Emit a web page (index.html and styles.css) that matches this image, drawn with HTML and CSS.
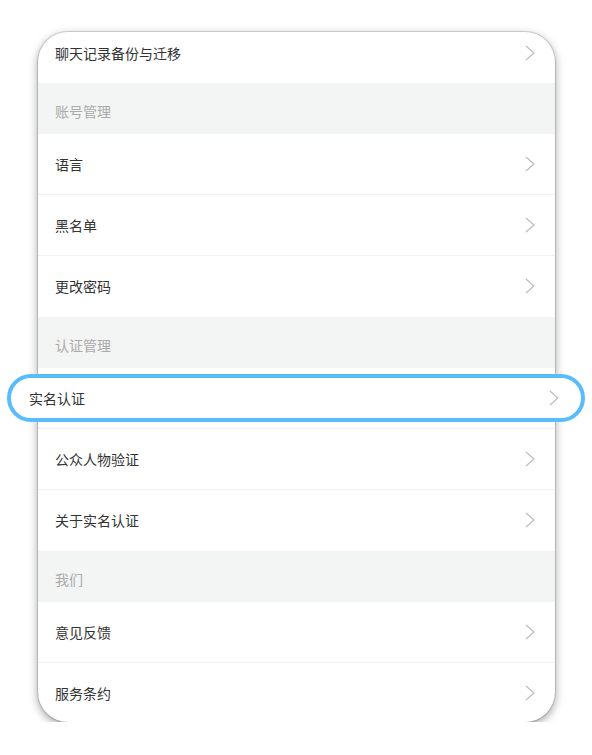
FILE: index.html
```html
<!DOCTYPE html>
<html lang="zh-CN">
<head>
    <meta charset="UTF-8">
    <meta name="viewport" content="width=device-width, initial-scale=1.0">
    <title>设置</title>
    <link rel="stylesheet" href="styles.css">
</head>
<body>
    <div class="card">
        <div class="row row-first">
            <span>聊天记录备份与迁移</span>
            <svg class="chevron" width="10" height="16" viewBox="0 0 10 16"><polyline points="1,1 9,8 1,15"/></svg>
        </div>

        <div class="section">账号管理</div>
        <div class="row">
            <span>语言</span>
            <svg class="chevron" width="10" height="16" viewBox="0 0 10 16"><polyline points="1,1 9,8 1,15"/></svg>
        </div>
        <div class="row">
            <span>黑名单</span>
            <svg class="chevron" width="10" height="16" viewBox="0 0 10 16"><polyline points="1,1 9,8 1,15"/></svg>
        </div>
        <div class="row row-last-in-group">
            <span>更改密码</span>
            <svg class="chevron" width="10" height="16" viewBox="0 0 10 16"><polyline points="1,1 9,8 1,15"/></svg>
        </div>

        <div class="section">认证管理</div>
        <div class="row row-focus">
            <!-- highlighted callout -->
            <div class="pill">
                <span>实名认证</span>
                <svg class="chevron" width="10" height="16" viewBox="0 0 10 16"><polyline points="1,1 9,8 1,15"/></svg>
            </div>
        </div>
        <div class="row">
            <span>公众人物验证</span>
            <svg class="chevron" width="10" height="16" viewBox="0 0 10 16"><polyline points="1,1 9,8 1,15"/></svg>
        </div>
        <div class="row row-last-in-group">
            <span>关于实名认证</span>
            <svg class="chevron" width="10" height="16" viewBox="0 0 10 16"><polyline points="1,1 9,8 1,15"/></svg>
        </div>

        <div class="section">我们</div>
        <div class="row">
            <span>意见反馈</span>
            <svg class="chevron" width="10" height="16" viewBox="0 0 10 16"><polyline points="1,1 9,8 1,15"/></svg>
        </div>
        <div class="row row-last">
            <span>服务条约</span>
            <svg class="chevron" width="10" height="16" viewBox="0 0 10 16"><polyline points="1,1 9,8 1,15"/></svg>
        </div>
    </div>
</body>
</html>
```

FILE: styles.css
```css
body {
    margin: 0;
    padding: 32px 0 0 38px;
    background: #ffffff;
    font-family: "Noto Sans CJK SC", "Noto Sans", sans-serif;
    font-size: 14px;
    color: #333333;
}

.card {
    width: 517px;
    background: #ffffff;
    border-radius: 30px;
    box-shadow: 0 0 0 1px rgba(0, 0, 0, 0.14), 0 3px 10px rgba(0, 0, 0, 0.38);
}

.row {
    position: relative;
    display: flex;
    align-items: center;
    justify-content: space-between;
    height: 60px;
    padding: 0 20px 0 17px;
    border-bottom: 1px solid #f1f1f1;
}

.row-first {
    height: 51px;
    padding-bottom: 10px;
    box-sizing: border-box;
    border-radius: 30px 30px 0 0;
    border-bottom: none;
}

.row-last-in-group {
    border-bottom-color: transparent;
}

.row-last {
    height: 59px;
    border-bottom: none;
    border-radius: 0 0 30px 30px;
}

.chevron {
    fill: none;
    stroke: #bcbcbc;
    stroke-width: 1.2;
}

.section {
    display: flex;
    align-items: center;
    height: 46px;
    padding: 5px 0 0 17px;
    background: #f3f4f4;
    color: #aaaaaa;
}

.pill {
    position: absolute;
    left: -31px;
    right: -30px;
    top: 6px;
    height: 40px;
    display: flex;
    align-items: center;
    justify-content: space-between;
    padding: 0 22px 0 18px;
    background: #ffffff;
    border: 4px solid #59bdfb;
    border-radius: 26px;
}
```
